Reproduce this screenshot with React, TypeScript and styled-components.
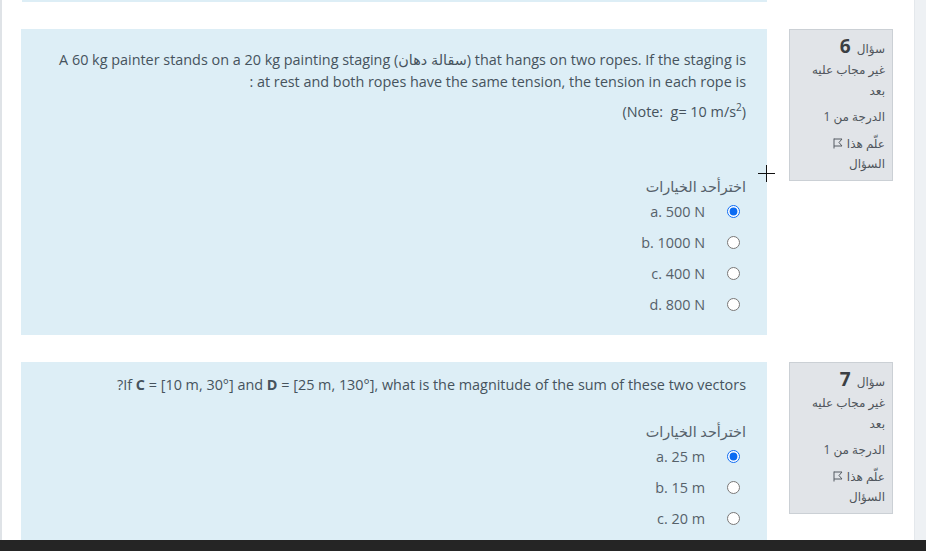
import React from "react";
import styled, { createGlobalStyle } from "styled-components";

const GlobalStyle = createGlobalStyle`
  html, body {
    margin: 0;
    padding: 0;
    background: #ffffff;
    overflow: hidden;
  }
  body {
    font-family: "Open Sans", "DejaVu Sans", sans-serif;
    color: #46535d;
  }
`;

const Screen = styled.div`
  display: flex;
  flex-direction: column;
  width: 926px;
  height: 551px;
  overflow: hidden;
`;

const Viewport = styled.div`
  flex: 1;
  display: flex;
  min-height: 0;
  overflow: hidden;
`;

const Region = styled.main`
  flex: 1;
  direction: rtl;
  border-left: 2px solid #dfe3e7;
  padding: 0 21px 0 20px;
  overflow: hidden;
`;

const SideStrip = styled.div`
  width: 11px;
  background: #eef1f4;
  border-left: 1px solid #e4e8ec;
`;

const Taskbar = styled.div`
  height: 11px;
  background: #252525;
`;

const PrevTail = styled.div`
  height: 2px;
  margin-right: 126px;
  background: #ddeef6;
`;

const Que = styled.section`
  position: relative;
  display: flex;
  align-items: flex-start;
  gap: 22px;
  margin-top: 27px;
`;

const Info = styled.div`
  flex: 0 0 104px;
  box-sizing: border-box;
  background: #e1e4e8;
  border: 1px solid #cbd0d5;
  padding: 4px 7px 5px 6px;
  font-size: 12px;
  line-height: 20.5px;
  color: #4f555b;
`;

const QNo = styled.h3`
  margin: 0 0 2px;
  font-size: 12px;
  font-weight: normal;
  line-height: 24px;
  height: 24px;
  color: #4f555b;

  b {
    font-family: "Open Sans", sans-serif;
    font-size: 19px;
    font-weight: 700;
    color: #3b3f44;
    margin-right: 3px;
  }
`;

const InfoLine = styled.div`
  margin-bottom: 6px;
`;

const FlagLine = styled.div`
  svg {
    display: inline-block;
    vertical-align: -1px;
    margin: 0 4px 0 5px;
  }
`;

const Formulation = styled.div`
  flex: 0 0 746px;
  box-sizing: border-box;
  background: #ddeef6;
  padding: 12px 21px 15px;
  font-size: 14.4px;
  line-height: 22px;
`;

const QText = styled.div<{ $tail?: number }>`
  margin-bottom: ${({ $tail }) => 27 + ($tail ?? 0)}px;

  sup {
    font-size: 10px;
    line-height: 0;
  }
`;

const Para = styled.p`
  margin: 8px 0 0;
`;

const Prompt = styled.div`
  line-height: 18px;
  color: #56616a;
`;

const Answer = styled.div`
  display: flex;
  flex-direction: column;
`;

const Option = styled.label`
  display: flex;
  align-items: center;
  height: 31px;
  color: #56616a;
`;

const Radio = styled.input`
  width: 13px;
  height: 13px;
  margin: 0 6px 0 22px;
  accent-color: #0b6bf2;
`;

const OptText = styled.bdi`
  direction: ltr;
`;

const Cursor = styled.svg`
  position: absolute;
  left: 736px;
  top: 136px;
`;

const FlagIcon = () => (
  <svg width="10" height="11" viewBox="0 0 10 11">
    <path
      d="M1 0.5 V10.5 M1 1 H9 L6 4.5 L9 8 H1"
      fill="none"
      stroke="#555b62"
      strokeWidth="1"
    />
  </svg>
);

interface Choice {
  id: string;
  text: string;
  checked?: boolean;
}

interface QuestionProps {
  number: number;
  children: React.ReactNode;
  choices: Choice[];
  tail?: number;
  overlay?: React.ReactNode;
}

const Question: React.FC<QuestionProps> = ({
  number,
  children,
  choices,
  tail,
  overlay,
}) => (
  <Que>
    <Info>
      <QNo>
        سؤال <b>{number}</b>
      </QNo>
      <InfoLine>غير مجاب عليه بعد</InfoLine>
      <InfoLine>الدرجة من 1</InfoLine>
      <FlagLine>
        علّم هذا
        <FlagIcon /> السؤال
      </FlagLine>
    </Info>
    <Formulation>
      <QText $tail={tail}>{children}</QText>
      <Prompt>اخترأحد الخيارات</Prompt>
      <Answer>
        {choices.map((c) => (
          <Option key={c.id}>
            <Radio
              type="radio"
              name={`q${number}`}
              defaultChecked={c.checked}
            />
            <OptText>
              {c.id}. {c.text}
            </OptText>
          </Option>
        ))}
      </Answer>
    </Formulation>
    {overlay}
  </Que>
);

export default function App() {
  return (
    <>
      <GlobalStyle />
      <Screen>
        <Viewport>
          <Region>
            <PrevTail />
            <Question
              number={6}
              tail={28}
              choices={[
                { id: "a", text: "500 N", checked: true },
                { id: "b", text: "1000 N" },
                { id: "c", text: "400 N" },
                { id: "d", text: "800 N" },
              ]}
              overlay={
                <Cursor width="17" height="17" viewBox="0 0 17 17">
                  <path d="M8.5 0 V17 M0 8.5 H17" stroke="#111" strokeWidth="1" />
                </Cursor>
              }
            >
              <Para>
                <bdi dir="ltr">
                  A 60 kg painter stands on a 20 kg painting staging (
                  <span dir="rtl">سقالة دهان</span>) that hangs on two ropes. If
                  the staging is
                  <br />
                  at rest and both ropes have the same tension, the tension in
                  each rope is
                </bdi>{" "}
                :
              </Para>
              <Para>
                <bdi dir="ltr">
                  (Note:&nbsp; g= 10 m/s<sup>2</sup>)
                </bdi>
              </Para>
            </Question>
            <Question
              number={7}
              choices={[
                { id: "a", text: "25 m", checked: true },
                { id: "b", text: "15 m" },
                { id: "c", text: "20 m" },
              ]}
            >
              <bdi dir="ltr">
                If <b>C</b> = [10 m, 30°] and <b>D</b> = [25 m, 130°], what is
                the magnitude of the sum of these two vectors
              </bdi>
              ?
            </Question>
          </Region>
          <SideStrip />
        </Viewport>
        <Taskbar />
      </Screen>
    </>
  );
}
